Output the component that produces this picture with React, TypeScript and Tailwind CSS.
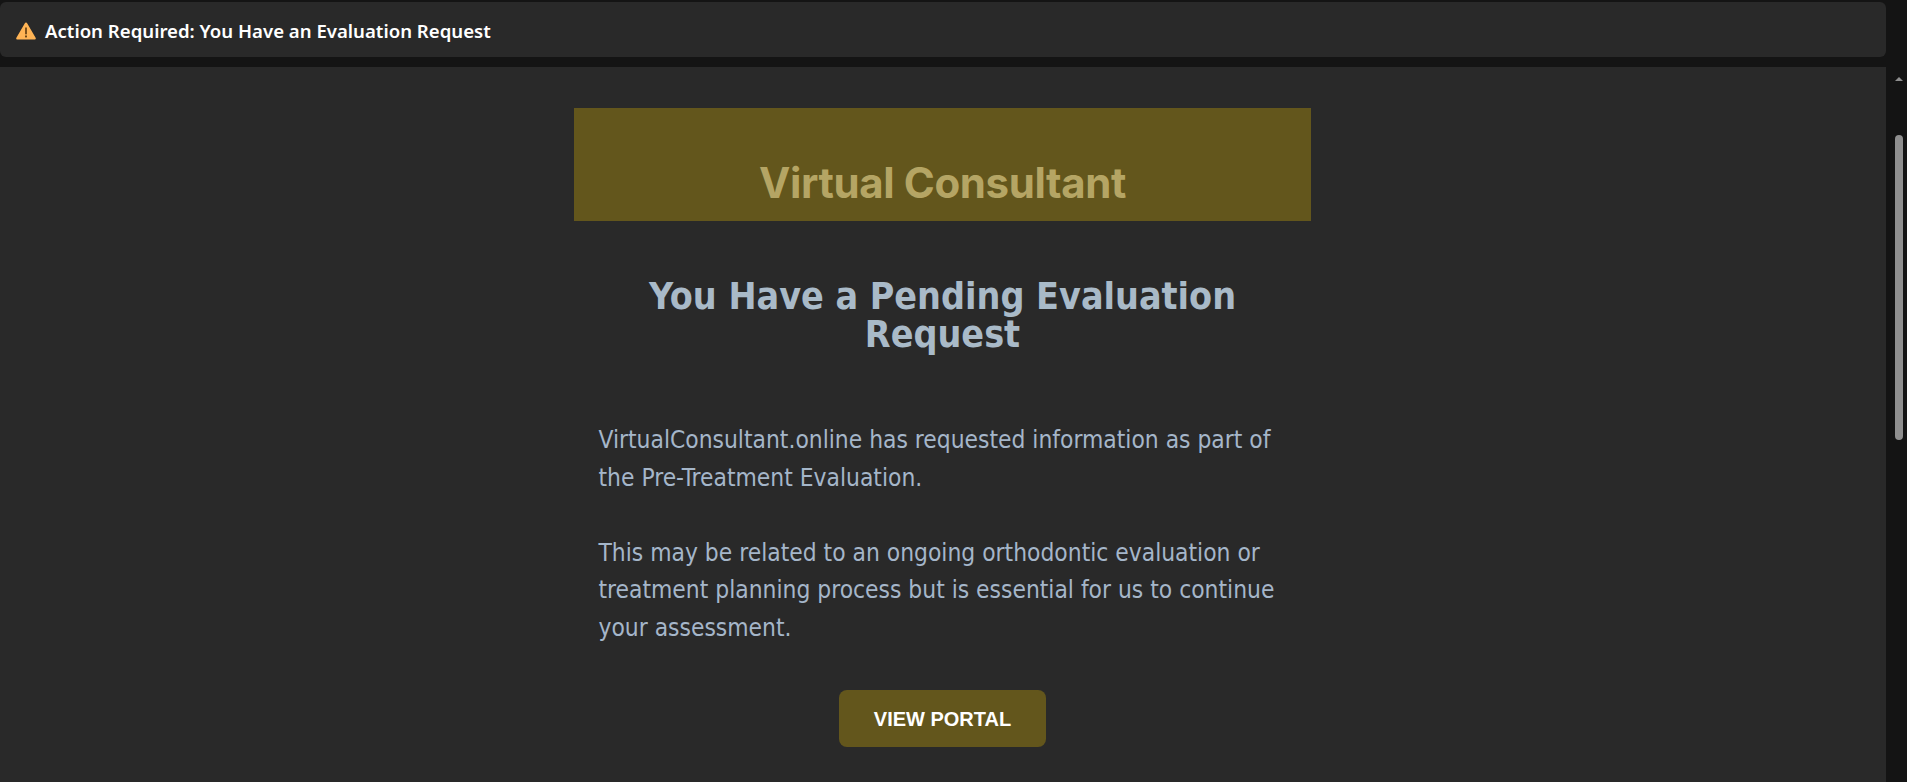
export default function App() {
  return (
    <div className="flex h-[782px] w-full overflow-hidden bg-[#141414]">
      <div className="flex w-[1886px] shrink-0 flex-col">
        <header className="mt-[2px] flex h-[55px] shrink-0 items-center gap-[9px] rounded-[6px] bg-[#292929] pt-[3px] pl-4 font-['Noto_Sans',sans-serif] text-[18.600px] font-semibold text-white">
          <svg width="20" height="18" viewBox="0 0 20 18" className="shrink-0">
            <path d="M10 0.6c.6 0 1 .3 1.300.8l8.300 14.300c.5.900 0 1.900-1.100 1.900H1.500C.4 17.600-.1 16.600.4 15.700L8.700 1.400c.3-.5.7-.8 1.300-.8z" fill="#ffb455" />
            <rect x="9.200" y="5.500" width="1.600" height="6.800" fill="#5c3a10" />
            <rect x="9.100" y="13.500" width="1.800" height="1.900" fill="#5c3a10" />
          </svg>
          <span>Action Required: You Have an Evaluation Request</span>
        </header>
        <main className="mt-[10px] flex flex-1 flex-col items-center bg-[#292929] pr-px">
          <div className="mt-[41px] flex h-[113px] w-[737px] shrink-0 items-end justify-center bg-[#63561c] pb-[8px] font-['Inter',sans-serif] text-[42px] leading-[60px] font-bold tracking-[-0.4px] text-[#b5a564]">
            Virtual Consultant
          </div>
          <h1 className="mt-[56px] w-[640px] text-center font-['DejaVu_Sans',sans-serif] text-[37.300px] leading-[38px] font-bold font-stretch-condensed text-[#a9bac8]">
            You Have a Pending Evaluation Request
          </h1>
          <div className="mt-[68px] w-[688px] font-['DejaVu_Sans',sans-serif] text-[24.350px] leading-[37.500px] font-stretch-condensed text-[#a5b6c9]">
            <p>VirtualConsultant.online has requested information as part of the Pre-Treatment Evaluation.</p>
            <p className="mt-[37.500px]">This may be related to an ongoing orthodontic evaluation or treatment planning process but is essential for us to continue your assessment.</p>
          </div>
          <button className="mt-[44px] flex h-[57px] w-[207px] items-center justify-center rounded-[8px] bg-[#63561c] font-['Liberation_Sans',sans-serif] text-[20px] font-bold text-white">
            VIEW PORTAL
          </button>
        </main>
      </div>
      <div className="flex w-[21px] shrink-0 flex-col items-start pl-[9px]">
        <div className="mt-[77px] h-0 w-0 border-x-[4px] border-b-[4px] border-x-transparent border-b-[#8f8f8f]" />
        <div className="mt-[54px] h-[305px] w-2 shrink-0 rounded-full bg-[#8f8f8f]" />
      </div>
    </div>
  );
}
